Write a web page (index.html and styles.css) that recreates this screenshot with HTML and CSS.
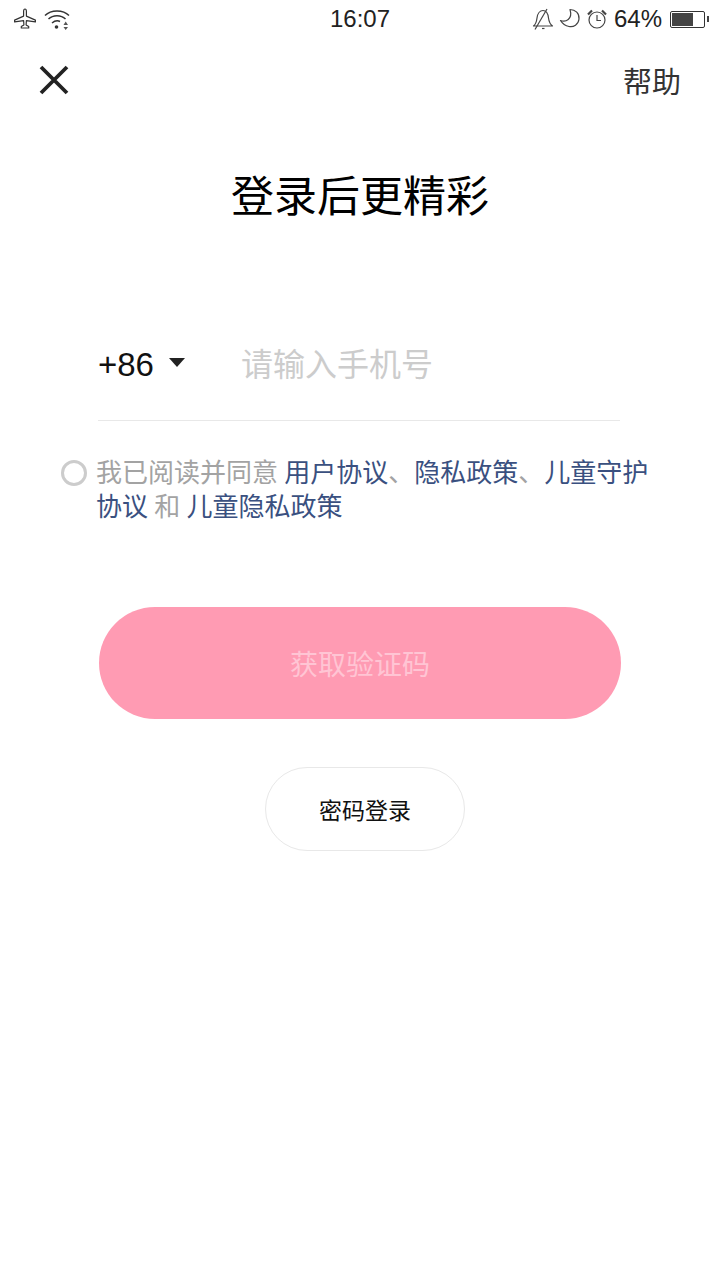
FILE: index.html
```html
<!DOCTYPE html>
<html lang="zh-CN">
<head>
  <meta charset="UTF-8">
  <title>登录</title>
  <meta name="viewport" content="width=device-width, initial-scale=1">
  <link rel="stylesheet" href="styles.css">
</head>
<body>
  <div class="page">
    <div class="status-bar">
      <div class="status-left">
        <svg width="24" height="22" viewBox="0 0 24 22" fill="none" stroke="#333" stroke-width="1.2" stroke-linejoin="round">
          <path d="M12 1c-1 0-1.400 1.200-1.400 2.500v4.600l-9 4v1.800l9-1.300.3 4.300-2.600 1.600v1.500h7.400v-1.500l-2.600-1.600.3-4.300 9 1.300v-1.800l-9-4V3.500C13.400 2.200 13 1 12 1z"/>
        </svg>
        <svg width="26" height="22" viewBox="0 0 26 22" fill="none" stroke="#333" stroke-width="1.500">
          <path d="M1 7.500C7 1.500 19 1.500 25 7.500"/>
          <path d="M4.500 11C9 6.500 17 6.500 21.500 11"/>
          <path d="M8 15c3-2.500 6-2.500 8-1.500"/>
          <circle cx="12.500" cy="19" r="1.800" fill="#333" stroke="none"/>
          <path d="M19.500 17l2.200-3.500 2.300 3.500zM19.500 19h4.500l-2.300 3z" fill="#555" stroke="none"/>
        </svg>
      </div>
      <div class="status-time">16:07</div>
      <div class="status-right">
        <svg width="22" height="22" viewBox="0 0 22 22" fill="none" stroke="#444" stroke-width="1.200" stroke-linejoin="round">
          <path d="M1.500 18c2-1.500 3-4 3.500-8C5.500 5.500 8 2.500 11 2.500s5 3 5.500 7.500c.5 4 2 6.500 4 8z"/>
          <path d="M15 1L3 21.500"/>
          <path d="M10 20.500h2.500"/>
        </svg>
        <svg width="22" height="22" viewBox="0 0 22 22" fill="none" stroke="#444" stroke-width="1.200" stroke-linejoin="round">
          <path d="M11 1.500c5.500 0 9.500 4 9 9.500-.5 5.500-5.500 8.500-10 7.500-3.500-.7-6.500-2.800-8.500-6 5 2 12.500-1 9.500-11z"/>
        </svg>
        <svg width="22" height="22" viewBox="0 0 22 22" fill="none" stroke="#444" stroke-width="1.200">
          <circle cx="11" cy="12" r="8"/>
          <path d="M11 7v5.500h4"/>
          <path d="M2 6.500L6 2.500M20 6.500L16 2.500" stroke-width="2.200"/>
        </svg>
        <span class="battery-text">64%</span>
        <div class="battery"><div class="battery-fill"></div></div>
        <div class="battery-cap"></div>
      </div>
    </div>

    <div class="nav">
      <svg width="30" height="30" viewBox="0 0 30 30" stroke="#222" stroke-width="3.800">
        <path d="M2 2L28 28M28 2L2 28"/>
      </svg>
      <span class="help">帮助</span>
    </div>

    <h1 class="title">登录后更精彩</h1>

    <div class="phone-row">
      <span class="area-code">+86</span>
      <span class="caret"></span>
      <span class="placeholder">请输入手机号</span>
    </div>

    <div class="agree">
      <span class="radio"></span>
      <p class="agree-text">我已阅读并同意 <a>用户协议</a>、<a>隐私政策</a>、<a>儿童守护</a><br><a>协议</a> 和 <a>儿童隐私政策</a></p>
    </div>

    <button class="btn-code">获取验证码</button>
    <button class="btn-password">密码登录</button>
  </div>
</body>
</html>
```

FILE: styles.css
```css
body {
  margin: 0;
  background: #fff;
  font-family: "Liberation Sans", "Noto Sans CJK SC", sans-serif;
  color: #222;
}
.page {
  width: 720px;
  height: 1280px;
  overflow: hidden;
}
.status-bar {
  height: 38px;
  display: grid;
  grid-template-columns: 1fr auto 1fr;
  align-items: center;
  padding: 0 11px 0 13px;
}
.status-left { display: flex; align-items: center; gap: 7px; }
.status-time { font-size: 24px; color: #222; margin-right: 2px; }
.status-right { display: flex; align-items: center; justify-content: flex-end; gap: 5px; }
.battery-text { font-size: 24px; color: #222; margin-left: 1px; }
.battery {
  box-sizing: border-box;
  width: 35px;
  height: 17px;
  border: 1px solid #333;
  border-radius: 2px;
  padding: 1px;
  margin-left: 3px;
}
.battery-fill { width: 21px; height: 13px; background: #444; }
.battery-cap { width: 2px; height: 6px; background: #444; margin-left: -3px; }
.nav {
  display: flex;
  justify-content: space-between;
  align-items: center;
  padding: 0 39px;
  height: 84px;
}
.help { font-size: 29px; color: #333; }
.title {
  margin: 45px 0 0;
  text-align: center;
  font-size: 43px;
  font-weight: 400;
  line-height: 60px;
  color: #000;
}
.phone-row {
  margin: 107px 100px 0 98px;
  height: 62px;
  display: flex;
  align-items: center;
  border-bottom: 1px solid #e8e8e8;
  padding-bottom: 24px;
}
.area-code { font-size: 33px; color: #111; }
.caret {
  width: 0;
  height: 0;
  border-left: 8px solid transparent;
  border-right: 8px solid transparent;
  border-top: 9px solid #222;
  margin: -6px 56px 0 15px;
}
.placeholder { font-size: 32px; color: #ccc; margin-top: -6px; }
.agree {
  display: flex;
  margin: 35px 60px 0 61px;
}
.radio {
  flex: none;
  width: 20px;
  height: 20px;
  border: 3px solid #ccc;
  border-radius: 50%;
  margin: 4px 9px 0 0;
}
.agree-text {
  margin: 0;
  font-size: 26px;
  line-height: 34px;
  word-spacing: -1px;
  color: #a3a3a3;
}
.agree-text a { color: #3a5080; }
.btn-code {
  display: block;
  width: 522px;
  height: 112px;
  margin: 83px 0 0 99px;
  border: none;
  border-radius: 56px;
  background: #ff9bb3;
  color: #ffc5d4;
  font-size: 28px;
  font-family: inherit;
}
.btn-password {
  display: block;
  width: 200px;
  height: 84px;
  margin: 48px 0 0 265px;
  background: #fff;
  border: 1px solid #e8e8e8;
  border-radius: 42px;
  font-size: 23px;
  font-family: inherit;
  color: #111;
}
```
